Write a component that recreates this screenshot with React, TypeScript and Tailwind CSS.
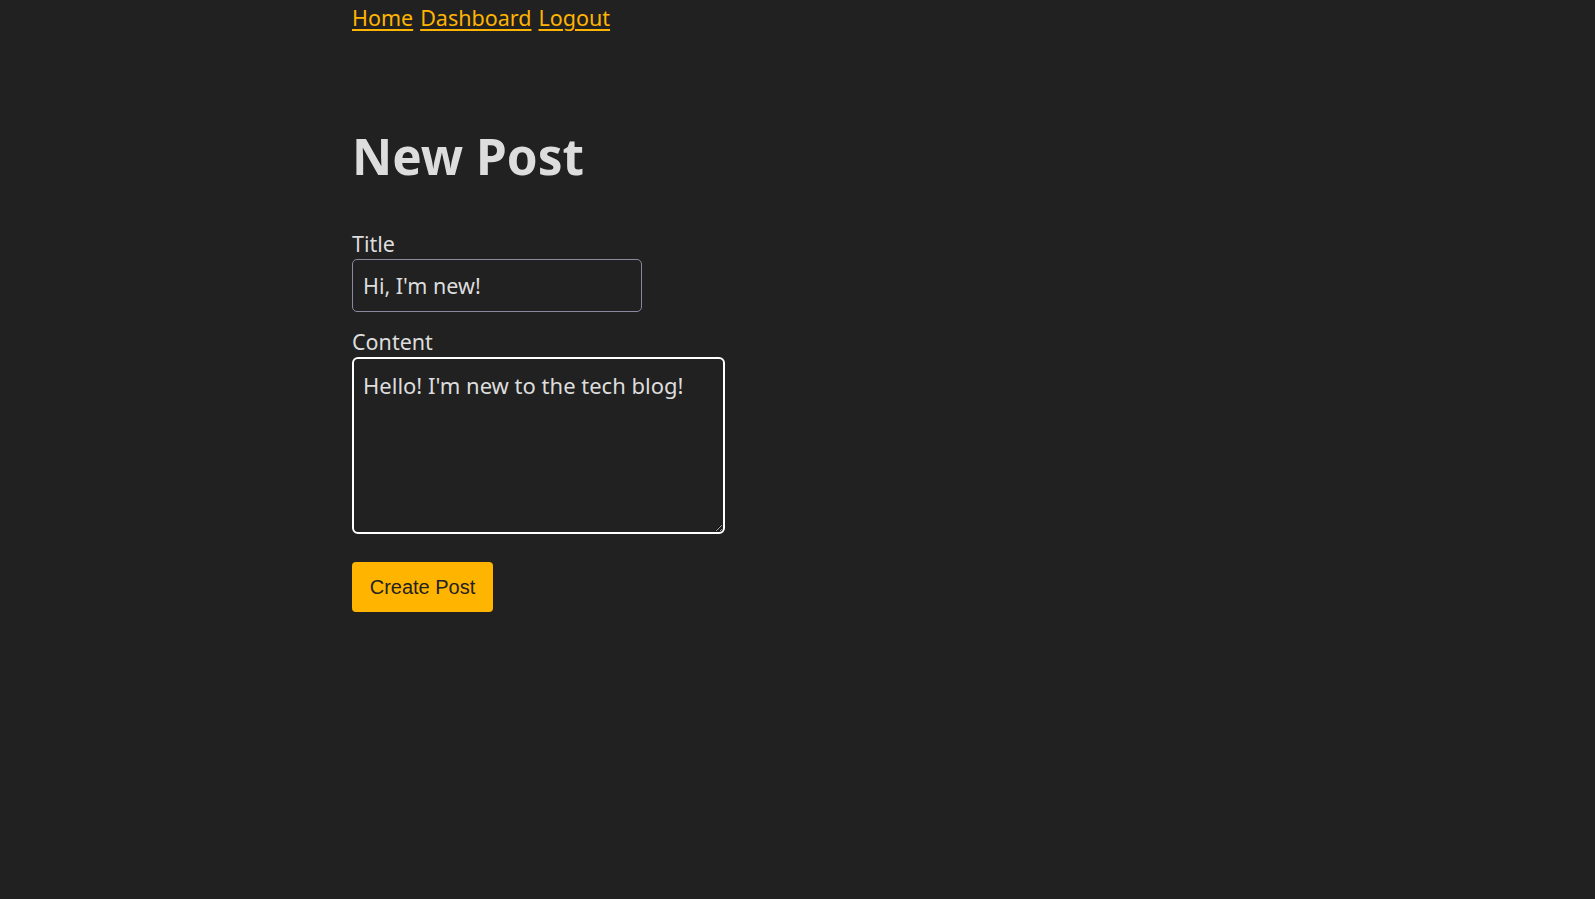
export default function App() {
  return (
    <div className="min-h-screen bg-[#212121] text-[#dddddd]" style={{ fontFamily: '"Noto Sans", "Open Sans", sans-serif' }}>
      <div className="mx-auto w-[891px]">
        <nav className="flex gap-[7px] text-[21.5px] leading-[36px] text-[#ffb400]">
          <a href="#" className="underline underline-offset-[3px]">Home</a>
          <a href="#" className="underline underline-offset-[3px]">Dashboard</a>
          <a href="#" className="underline underline-offset-[3px]">Logout</a>
        </nav>

        <h1 className="mt-[90px] text-[49.5px] font-bold leading-[60px] text-[#dddddd]">New Post</h1>

        <form className="mt-[44px] flex flex-col items-start">
          <label className="text-[21.5px] leading-[28px]">Title</label>
          <input
            defaultValue="Hi, I'm new!"
            className="mt-[1px] h-[53px] w-[290px] rounded-[5px] border border-[#8a8a9e] bg-[#212121] px-[10px] text-[21.5px] text-[#dddddd] outline-none"
          />
          <label className="mt-[16px] text-[21.5px] leading-[28px]">Content</label>
          <textarea
            defaultValue="Hello! I'm new to the tech blog!"
            className="mt-[1px] h-[177px] w-[373px] rounded-[6px] border-2 border-white bg-[#212121] px-[9px] pt-[11px] pb-[8px] text-[22px] leading-[30px] text-[#dddddd] outline-none"
          />
          <button
            type="button"
            className="mt-[28px] h-[50px] w-[141px] rounded-[4px] bg-[#ffb400] text-[20px] text-[#222222]"
            style={{ fontFamily: '"Liberation Sans", Arial, sans-serif' }}
          >
            Create Post
          </button>
        </form>
      </div>
    </div>
  );
}
